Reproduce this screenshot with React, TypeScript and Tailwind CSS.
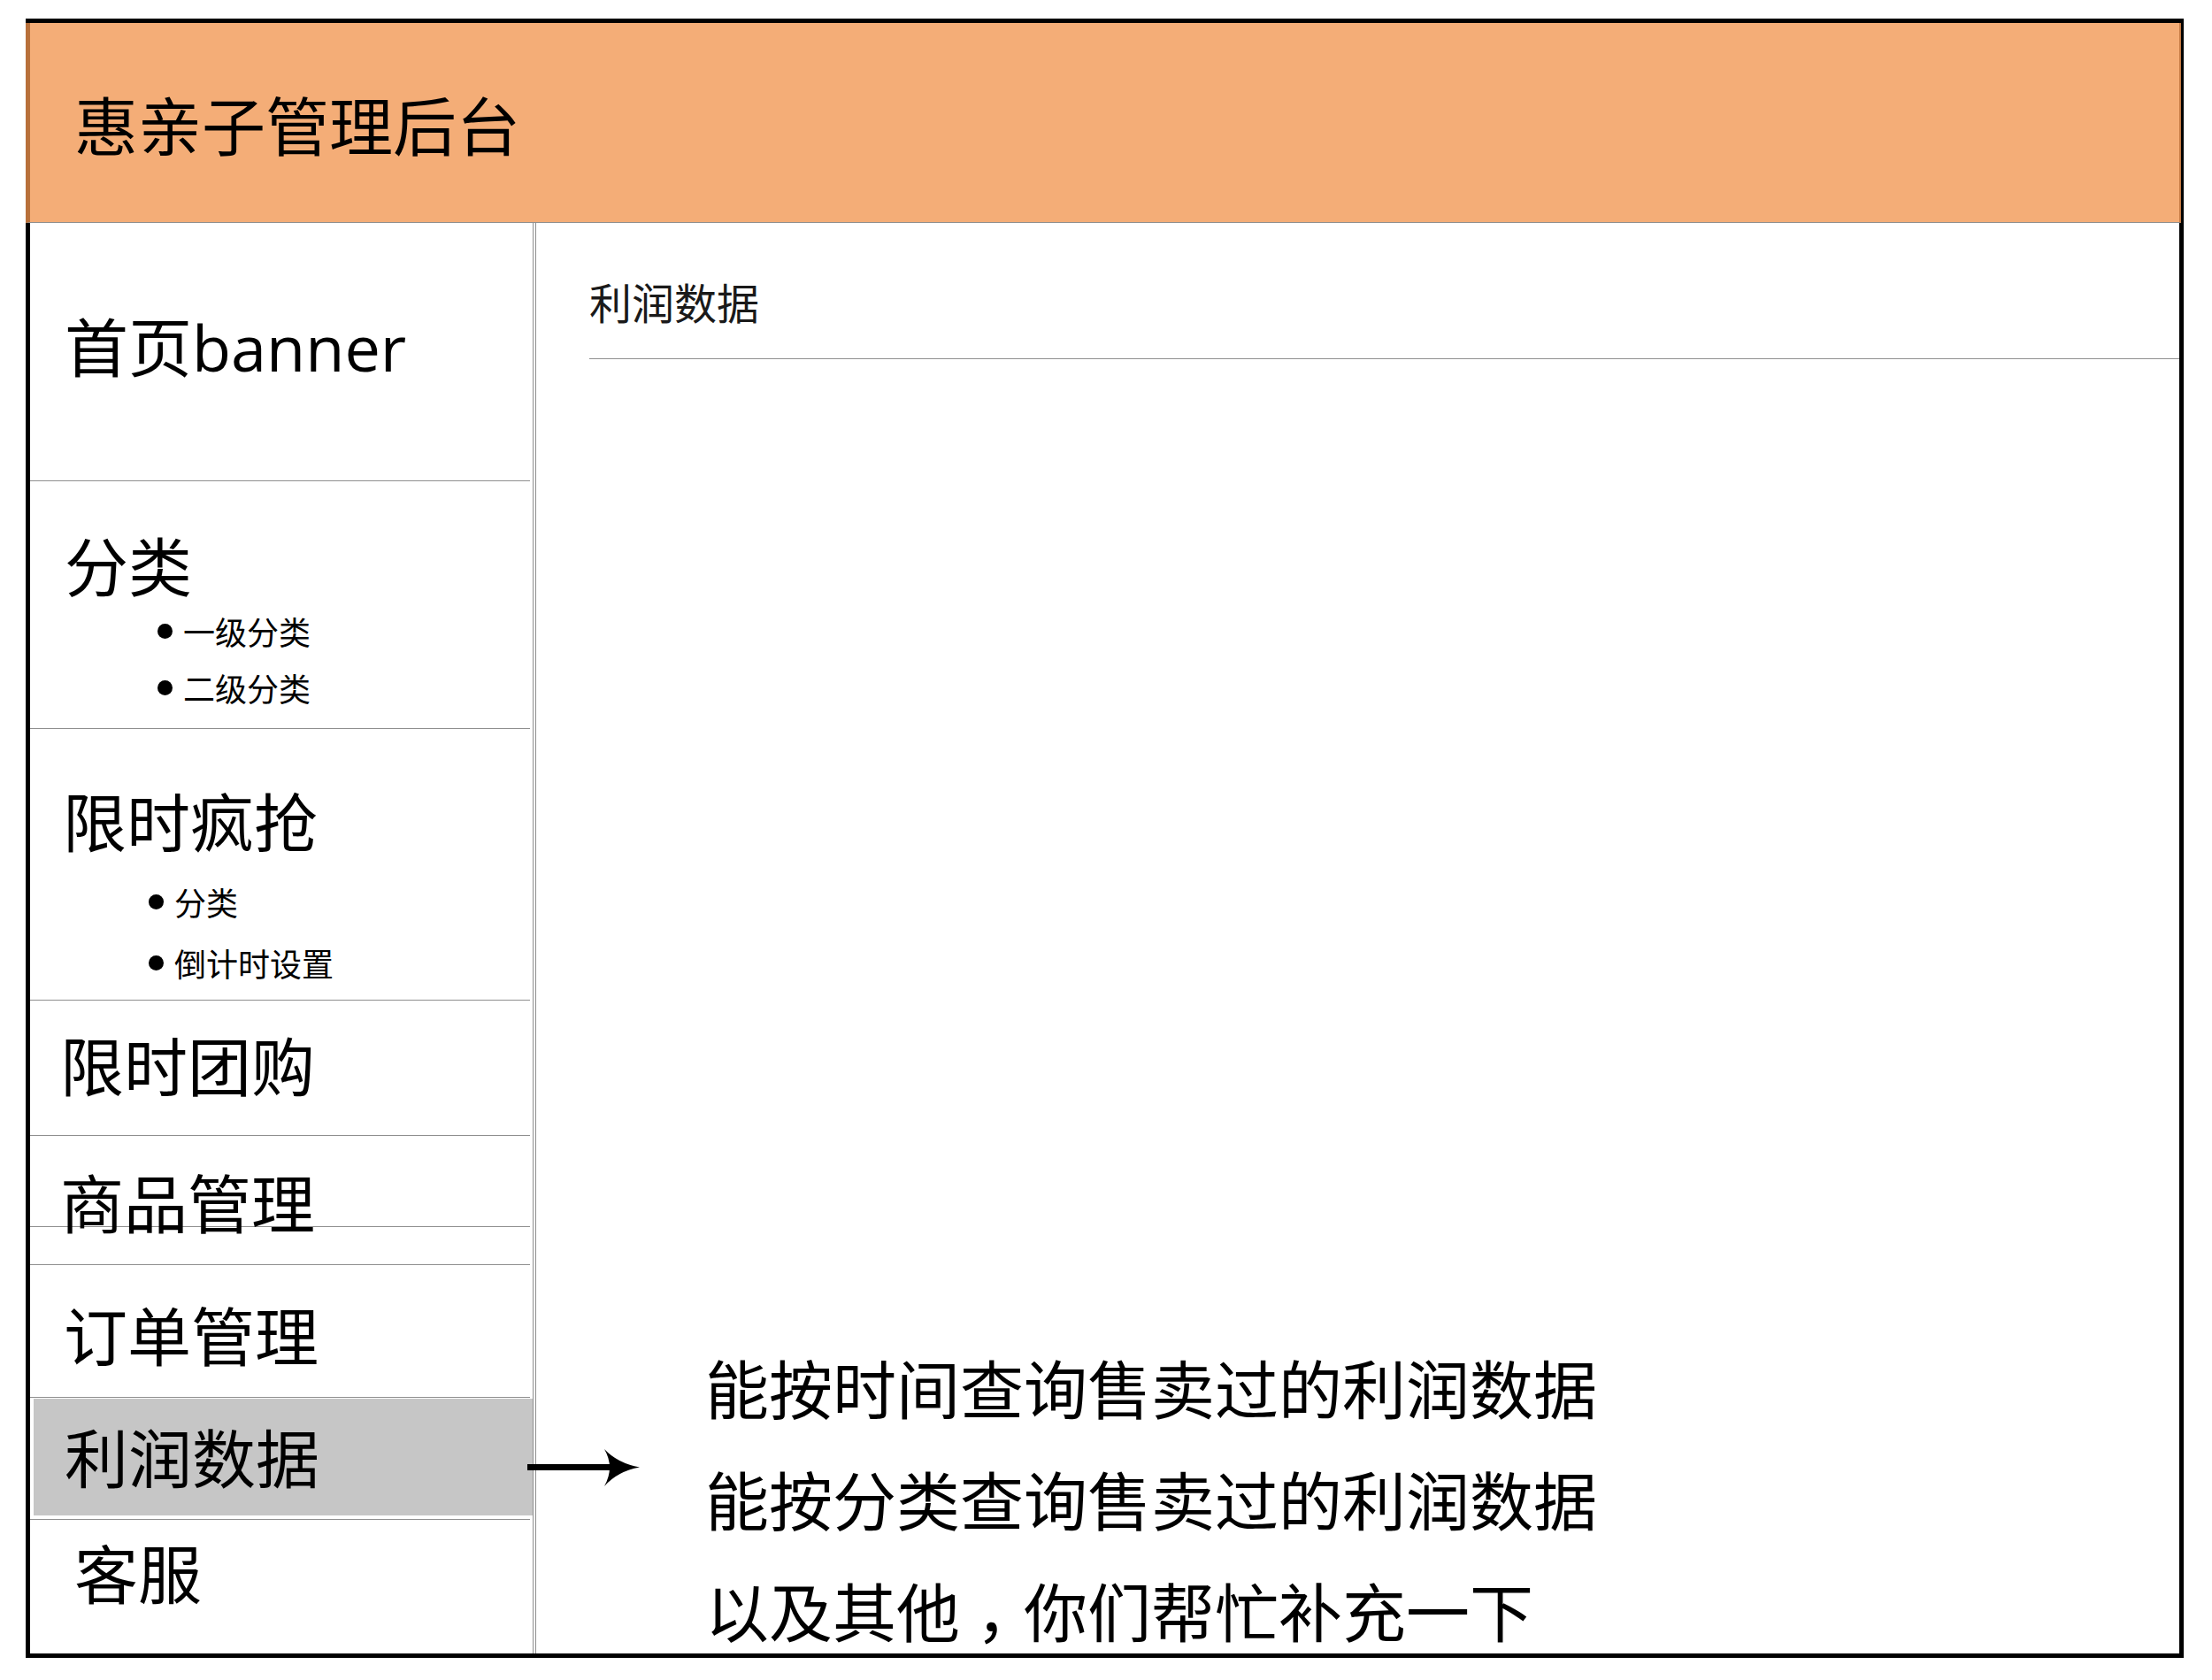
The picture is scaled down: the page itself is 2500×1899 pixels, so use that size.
import React from 'react';

const cjk = { fontFamily: '"Noto Sans CJK SC", "Noto Sans", sans-serif' };

const Bullet: React.FC<{ label: string }> = ({ label }) => (
  <div className="flex items-center gap-[12px] h-[36px]">
    <span className="w-[17px] h-[17px] rounded-full bg-black flex-none" />
    <span className="text-[36px] leading-none">{label}</span>
  </div>
);

const App: React.FC = () => {
  return (
    <div className="w-[2500px] h-[1899px] bg-white relative overflow-hidden text-black" style={cjk}>
      <div className="ml-[29px] mt-[21px] w-[2439px] h-[1853px] border-[5px] border-black flex flex-col">
        {/* header */}
        <div className="-ml-[5px] -mr-[2px] h-[226px] flex-none flex items-center bg-[#f4ad77] border-l-[5px] border-r-[2px] border-l-[#b8703a] border-r-[#c47a44] border-b border-b-[#8f8f8f] pl-[50px]">
          <h1 className="text-[72px] leading-none font-normal">惠亲子管理后台</h1>
        </div>

        <div className="flex flex-1 min-h-0">
          {/* sidebar */}
          <aside className="w-[572px] flex-none border-r border-[#8f8f8f]">
            <div className="w-[569px] h-full border-r border-[#8f8f8f] flex flex-col">
              <div className="w-[565px] h-[292px] border-b border-[#8f8f8f] pt-[101px] pl-[39px] text-[72px] leading-none">
                首页<span style={{ fontFamily: '"Open Sans", sans-serif' }}>banner</span>
              </div>

              <div className="w-[565px] h-[280px] border-b border-[#8f8f8f] pt-[57px] pl-[39px]">
                <div className="text-[72px] leading-none mb-[22px]">分类</div>
                <div className="ml-[105px] flex flex-col gap-[28px]">
                  <Bullet label="一级分类" />
                  <Bullet label="二级分类" />
                </div>
              </div>

              <div className="w-[565px] h-[307px] border-b border-[#8f8f8f] pt-[66px] pl-[37px]">
                <div className="text-[72px] leading-none mb-[39px]">限时疯抢</div>
                <div className="ml-[97px] flex flex-col gap-[33px]">
                  <Bullet label="分类" />
                  <Bullet label="倒计时设置" />
                </div>
              </div>

              <div className="w-[565px] h-[153px] border-b border-[#8f8f8f] pt-[35px] pl-[34px] text-[72px] leading-none">
                限时团购
              </div>

              <div className="w-[565px] h-[103px] border-b border-[#8f8f8f] pt-[37px] pl-[34px] text-[72px] leading-none whitespace-nowrap">
                商品管理
              </div>
              <div className="w-[565px] h-[43px] border-b border-[#8f8f8f]" />

              <div className="w-[565px] h-[150px] border-b border-[#8f8f8f] pt-[41px] pl-[38px] text-[72px] leading-none">
                订单管理
              </div>

              <div className="w-[565px] h-[138px] border-b border-[#8f8f8f]">
                <div className="mt-px ml-[4px] w-[564px] h-[132px] bg-[#c6c6c6] pt-[28px] pl-[35px] text-[72px] leading-none">
                  利润数据
                </div>
              </div>

              <div className="flex-1 pt-[22px] pl-[50px] text-[72px] leading-none">客服</div>
            </div>
          </aside>

          {/* content */}
          <main className="flex-1 pt-[64px]">
            <div className="pl-[60px] text-[48px] leading-none text-[#1a1a1a]">利润数据</div>
            <div className="ml-[60px] mt-[41px] h-px bg-[#8f8f8f]" />
            <div className="ml-[191px] mt-[1098px] text-[72px] leading-[126px] whitespace-nowrap">
              <p>能按时间查询售卖过的利润数据</p>
              <p>能按分类查询售卖过的利润数据</p>
              <p>
                以及其他<span className="pl-[18px] tracking-[-18px]">，</span>你们帮忙补充一下
              </p>
            </div>
          </main>
        </div>
      </div>

      {/* arrow pointing from active menu to notes */}
      <svg className="absolute left-[590px] top-[1630px]" width="140" height="60" viewBox="0 0 140 60">
        <rect x="6" y="25" width="96" height="7" fill="#000" />
        <path d="M93 8 Q108 24 133 28.5 Q108 33 93 50 Q105 28.5 93 8 Z" fill="#000" />
      </svg>
    </div>
  );
};

export default App;
